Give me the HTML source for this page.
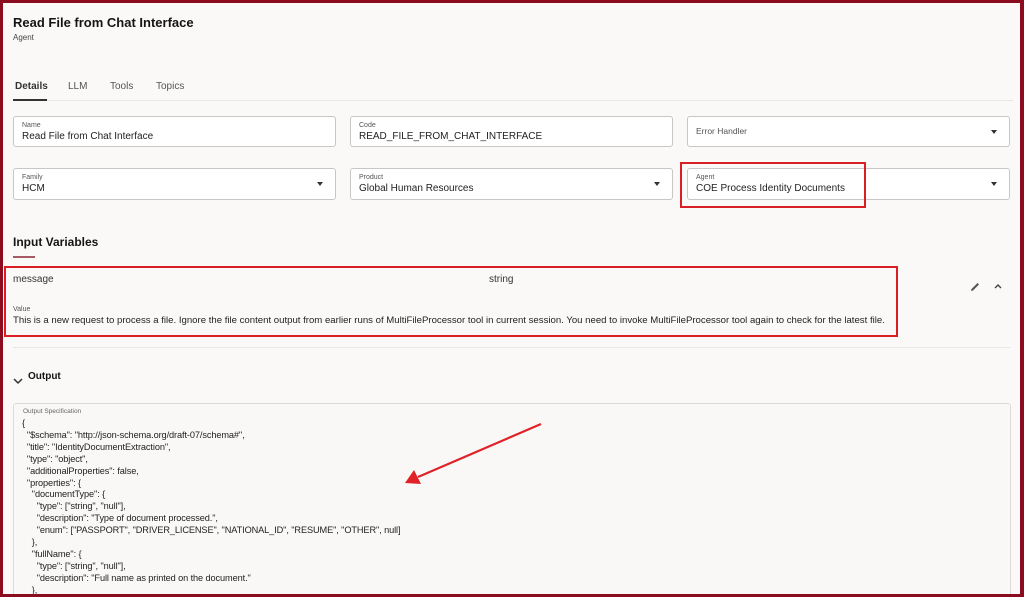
<!DOCTYPE html>
<html><head><meta charset="utf-8"><style>
*{margin:0;padding:0;box-sizing:border-box}
html,body{width:1024px;height:597px;overflow:hidden}
body{background:#fbf9f8;font-family:"Liberation Sans",sans-serif;color:#161513;position:relative}
.frame{position:absolute;left:0;top:0;width:1024px;height:597px;border:3px solid #8b0c1e;border-right-width:4px;pointer-events:none;z-index:10}
.a{position:absolute;white-space:nowrap}
.f{position:absolute;background:#fff;border:1px solid #c9c6c3;border-radius:3px}
.f .l{position:absolute;left:8px;top:5px;font-size:7px;color:#555}
.f .v{position:absolute;left:8px;top:14px;font-size:10px;color:#222}
.f .c{position:absolute;right:12px;top:13px;width:0;height:0;border-left:3.5px solid transparent;border-right:3.5px solid transparent;border-top:4px solid #333}
.red{position:absolute;border:2px solid #d91e26}
.code{position:absolute;left:22px;top:418px;font-size:9.2px;line-height:11.9px;color:#222;white-space:pre;letter-spacing:-0.1px}
</style></head><body>
<div class="frame"></div>
<div class="a" style="left:13px;top:15px;font-size:13px;font-weight:bold">Read File from Chat Interface</div>
<div class="a" style="left:13px;top:33px;font-size:8px;color:#444">Agent</div>
<div class="a" style="left:15px;top:81px;font-size:10px;font-weight:bold;color:#333">Details</div>
<div class="a" style="left:68px;top:81px;font-size:10px;color:#555">LLM</div>
<div class="a" style="left:110px;top:81px;font-size:10px;color:#555">Tools</div>
<div class="a" style="left:156px;top:81px;font-size:10px;color:#555">Topics</div>
<div class="a" style="left:13px;top:100px;width:1000px;height:1px;background:#e8e5e3"></div>
<div class="a" style="left:13px;top:99px;width:34px;height:2px;background:#333"></div>

<div class="f" style="left:13px;top:116px;width:323px;height:31px"><div class="l">Name</div><div class="v">Read File from Chat Interface</div></div>
<div class="f" style="left:350px;top:116px;width:323px;height:31px"><div class="l">Code</div><div class="v">READ_FILE_FROM_CHAT_INTERFACE</div></div>
<div class="f" style="left:687px;top:116px;width:323px;height:31px"><div class="v" style="top:9px;font-size:8.5px;color:#555">Error Handler</div><div class="c"></div></div>
<div class="f" style="left:13px;top:168px;width:323px;height:32px"><div class="l">Family</div><div class="v">HCM</div><div class="c"></div></div>
<div class="f" style="left:350px;top:168px;width:323px;height:32px"><div class="l">Product</div><div class="v">Global Human Resources</div><div class="c"></div></div>
<div class="f" style="left:687px;top:168px;width:323px;height:32px"><div class="l">Agent</div><div class="v">COE Process Identity Documents</div><div class="c"></div></div>
<div class="red" style="left:680px;top:162px;width:186px;height:46px"></div>

<div class="a" style="left:13px;top:235px;font-size:12px;font-weight:bold">Input Variables</div>
<div class="a" style="left:13px;top:256px;width:22px;height:2px;background:#a55a64"></div>

<div class="a" style="left:13px;top:274px;font-size:10px;color:#333">message</div>
<div class="a" style="left:489px;top:274px;font-size:10px;color:#333">string</div>
<div class="a" style="left:13px;top:306px;font-size:7px;color:#555">Value</div>
<div class="a" style="left:13px;top:315px;font-size:9.6px;color:#222">This is a new request to process a file. Ignore the file content output from earlier runs of MultiFileProcessor tool in current session. You need to invoke MultiFileProcessor tool again to check for the latest file.</div>
<div class="red" style="left:4px;top:266px;width:894px;height:71px"></div>
<svg class="a" style="left:968px;top:280px" width="14" height="14" viewBox="0 0 14 14"><path d="M3 11 L3.5 9 L9.5 3 L11 4.5 L5 10.5 Z" fill="#555"/></svg>
<svg class="a" style="left:993px;top:282px" width="10" height="8" viewBox="0 0 10 8"><path d="M2 6 L5 3 L8 6" stroke="#444" stroke-width="1.4" fill="none"/></svg>
<div class="a" style="left:13px;top:347px;width:997px;height:1px;background:#e8e5e3"></div>

<svg class="a" style="left:12px;top:376px" width="12" height="10" viewBox="0 0 12 10"><path d="M2 3 L6 7 L10 3" stroke="#333" stroke-width="1.5" fill="none"/></svg>
<div class="a" style="left:28px;top:371px;font-size:10px;font-weight:bold">Output</div>

<div class="a" style="left:13px;top:403px;width:998px;height:194px;border:1px solid #ddd9d6;border-bottom:none;border-radius:3px 3px 0 0;background:#faf8f7"></div>
<div class="a" style="left:23px;top:408px;font-size:6.5px;color:#666">Output Specification</div>
<div class="code">{
  "$schema": "http://json-schema.org/draft-07/schema#",
  "title": "IdentityDocumentExtraction",
  "type": "object",
  "additionalProperties": false,
  "properties": {
    "documentType": {
      "type": ["string", "null"],
      "description": "Type of document processed.",
      "enum": ["PASSPORT", "DRIVER_LICENSE", "NATIONAL_ID", "RESUME", "OTHER", null]
    },
    "fullName": {
      "type": ["string", "null"],
      "description": "Full name as printed on the document."
    },</div>
<svg class="a" style="left:0;top:0" width="1024" height="597"><line x1="541" y1="424" x2="418" y2="477" stroke="#e02228" stroke-width="2.2"/><path d="M405 483 L414 470 L421 484 Z" fill="#e02228"/></svg>
</body></html>
